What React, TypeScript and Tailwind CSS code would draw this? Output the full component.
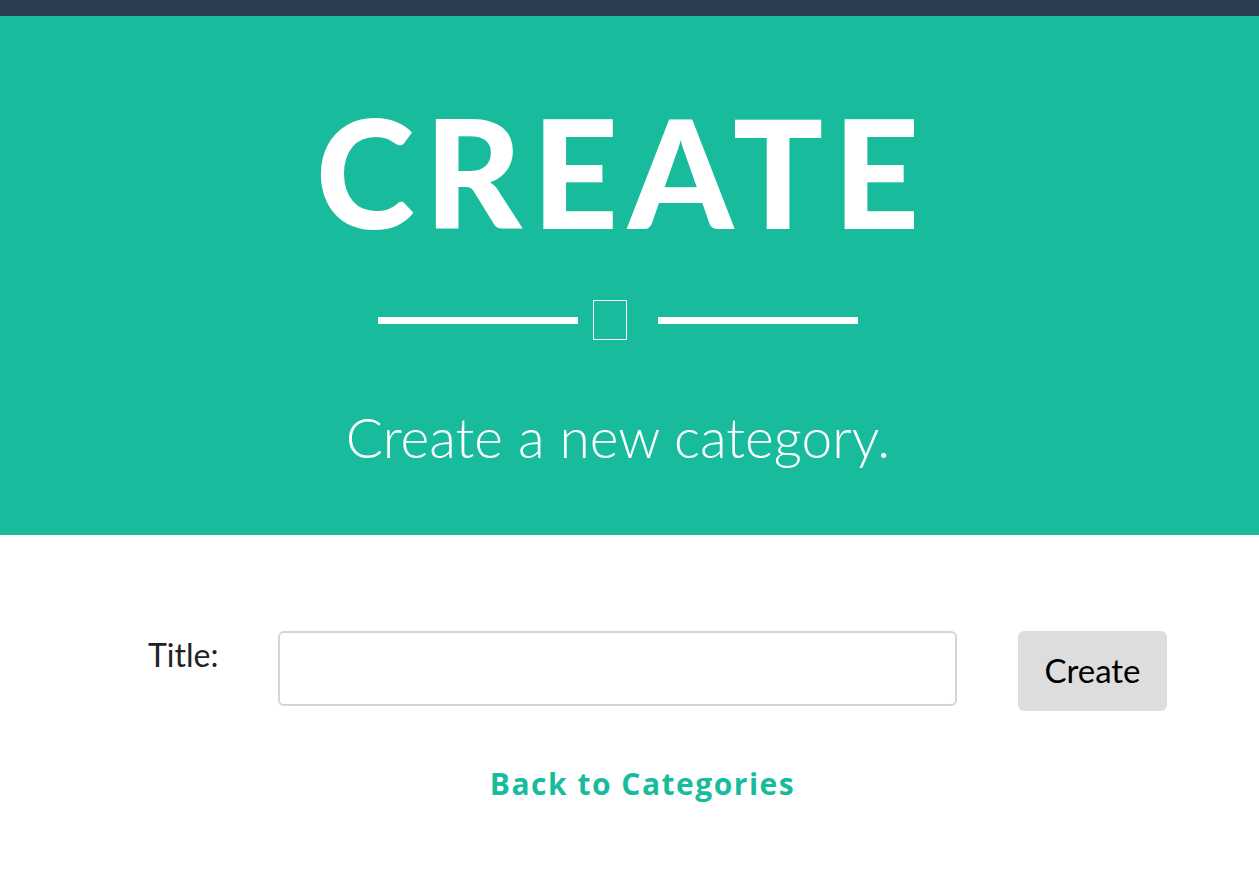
import React, { useState } from 'react';

export default function App() {
  const [title, setTitle] = useState('');

  return (
    <div className="min-h-[870px] bg-white font-['Lato',sans-serif]">
      <div className="h-4 bg-[#2c3e50]" />

      <header className="h-[519px] bg-[#18bc9c] pr-[23px] flex flex-col items-center text-white">
        <h1 className="mt-[65px] pl-[9px] font-black text-[150px] leading-[180px] tracking-[10px]">
          CREATE
        </h1>
        <div className="mt-[39px] flex items-center">
          <div className="w-[200px] h-[7px] bg-white" />
          <div className="ml-[15px] mr-[31px] w-[34px] h-[40px] border border-white" />
          <div className="w-[200px] h-[7px] bg-white" />
        </div>
        <p className="mt-[65px] font-light text-[55px] leading-[64px]">Create a new category.</p>
      </header>

      <form className="mt-[96px] flex items-start pl-[148px]" onSubmit={e => e.preventDefault()}>
        <label className="w-[130px] pt-[4px] text-[32px] leading-[40px] text-[#222]">Title:</label>
        <input
          value={title}
          onChange={e => setTitle(e.target.value)}
          className="w-[679px] h-[75px] rounded-md border-2 border-[#d4d4dc] px-3 text-[28px] outline-none"
        />
        <button className="ml-[61px] w-[149px] h-[80px] rounded-md bg-[#dddddd] text-[33px] text-black">
          Create
        </button>
      </form>

      <div className="mt-[50px] pl-[26px] text-center">
        <a href="#" className="font-['Open_Sans',sans-serif] font-bold text-[30px] tracking-[1.5px] text-[#18bc9c]">
          Back to Categories
        </a>
      </div>
    </div>
  );
}
